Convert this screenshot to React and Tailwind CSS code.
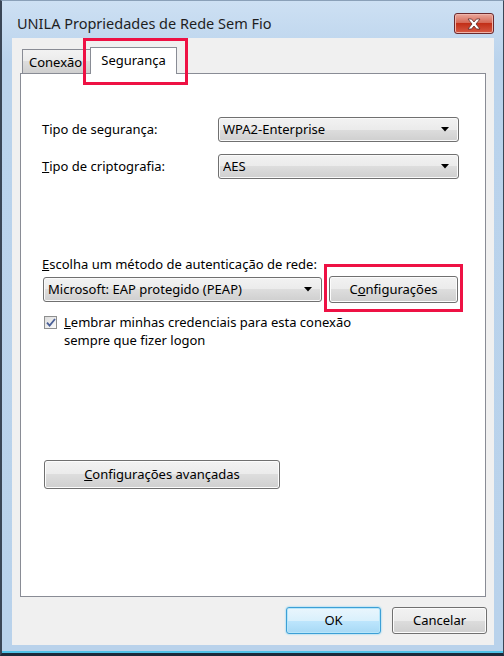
import React from "react";

const font = "font-['Segoe_UI','Noto_Sans','Open_Sans',sans-serif]";

function Arrow() {
  return (
    <svg width="8" height="5" viewBox="0 0 8 5" className="shrink-0">
      <path d="M0 0h8L4 4.5z" fill="#000" />
    </svg>
  );
}

function Combo({ value, width }) {
  return (
    <div
      className={`${width} h-[25px] flex items-center justify-between pl-[4px] pr-[9px] border border-[#707070] rounded-[3px] bg-[linear-gradient(#f2f2f2,#ebebeb_50%,#dddddd_50%,#cfcfcf)] shadow-[inset_0_0_0_1px_#fafafa] text-[13px] text-black`}
    >
      <span className="truncate">{value}</span>
      <Arrow />
    </div>
  );
}

function Button({ children, className = "", primary }) {
  const look = primary
    ? "border-[#3c9fd6] bg-[linear-gradient(#eaf6fd,#d9f0fc_50%,#bee6fd_50%,#a7d9f5)] shadow-[inset_0_0_0_1px_#b7e6fa,0_0_2px_#5cc8f5]"
    : "border-[#707070] bg-[linear-gradient(#f2f2f2,#ebebeb_50%,#dddddd_50%,#cfcfcf)] shadow-[inset_0_0_0_1px_#fcfcfc]";
  return (
    <div
      className={`flex items-center justify-center border rounded-[3px] text-[13px] text-black ${look} ${className}`}
    >
      {children}
    </div>
  );
}

function Highlight({ className }) {
  return (
    <div
      className={`absolute border-[3px] border-[#ee1144] pointer-events-none ${className}`}
    />
  );
}

export default function App() {
  return (
    <div
      className={`${font} w-[504px] h-[656px] flex flex-col border-l-2 border-r border-b-[3px] border-t border-l-[#3a4656] border-r-[#3a4656] border-b-[#1c2a3a] border-t-[#8aa0b8] bg-[linear-gradient(#cde0f3,#bad3ec_60px,#b9d2eb_calc(100%-2px),#4fc3e8_calc(100%-2px),#4fc3e8)]`}
    >
      {/* title bar */}
      <div className="h-[37px] shrink-0 flex items-start justify-between pl-[15px] pr-[9px] pt-[12px]">
        <span className="text-[14.5px] leading-[20px] text-[#1e1e1e]">
          UNILA Propriedades de Rede Sem Fio
        </span>
        <div className="w-[40px] h-[21px] flex items-center justify-center rounded-[3px] border border-[#6b2a2e] bg-[linear-gradient(#e9a89c,#d66a58_45%,#c22f18_50%,#d65a44)] shadow-[inset_0_0_0_1px_#efb4aa]">
          <svg width="16" height="12" viewBox="0 0 16 12">
            <path
              d="M2 1h3.5L8 4l2.5-3H14l-4 5 4 5h-3.5L8 8l-2.5 3H2l4-5z"
              fill="#fff"
              stroke="#5a2a2a"
              strokeWidth="0.8"
              strokeLinejoin="round"
            />
          </svg>
        </div>
      </div>

      {/* client area */}
      <div className="ml-[10px] mr-[9px] h-[607px] bg-[#f0f0f0] flex flex-col pt-[9px] pl-[8px] pr-[8px]">
        {/* tabs */}
        <div className="flex items-end h-[26px] pl-[2px]">
          <div className="w-[69px] h-[24px] border border-b-0 border-[#898c95] bg-[linear-gradient(#f2f2f2,#ebebeb_50%,#dddddd_50%,#cfcfcf)] overflow-hidden pl-[6px] pt-[3px] text-[13px] leading-[18px] text-black whitespace-nowrap">
            Conexão
          </div>
          <div className="relative z-10 -ml-[1px] w-[87px] h-[27px] -mb-[1px] border border-b-0 border-[#898c95] bg-white flex justify-center pt-[3px] text-[13px] leading-[18px] text-black">
            Segurança
            <Highlight className="-left-[8px] -top-[10px] w-[105px] h-[47px]" />
          </div>
        </div>

        {/* tab page */}
        <div className="h-[524px] border border-[#898c95] bg-white pl-[21px] pt-[43px] flex flex-col text-[13px] text-black">
          <div className="flex items-center">
            <span className="w-[176px]">Tipo de segurança:</span>
            <Combo value="WPA2-Enterprise" width="w-[241px]" />
          </div>
          <div className="flex items-center mt-[12px]">
            <span className="w-[176px]">
              <span className="underline">T</span>ipo de criptografia:
            </span>
            <Combo value="AES" width="w-[241px]" />
          </div>

          <div className="mt-[77px] leading-[16px]">
            <span className="underline">E</span>scolha um método de autenticação de rede:
          </div>
          <div className="flex items-center mt-[4px] pl-[1px]">
            <Combo value="Microsoft: EAP protegido (PEAP)" width="w-[279px]" />
            <div className="relative ml-[7px]">
              <Button className="w-[129px] h-[27px]">
                C<span className="underline">o</span>nfigurações
              </Button>
              <Highlight className="-left-[5px] -top-[12px] w-[139px] h-[48px]" />
            </div>
          </div>

          <div className="flex items-start mt-[10px] pl-[2px] leading-[18px]">
            <div className="w-[13px] h-[13px] mt-[3px] shrink-0 border border-[#8e8f8f] bg-[linear-gradient(135deg,#dcdcdc,#fbfbfb)] flex items-center justify-center">
              <svg width="10" height="9" viewBox="0 0 10 9">
                <path
                  d="M1 4.6l2.6 3L9 1"
                  fill="none"
                  stroke="#4a5f97"
                  strokeWidth="1.8"
                />
              </svg>
            </div>
            <div className="ml-[7px]">
              <div>
                <span className="underline">L</span>embrar minhas credenciais para esta conexão
              </div>
              <div>sempre que fizer logon</div>
            </div>
          </div>

          <div className="mt-[111px] pl-[2px]">
            <Button className="w-[236px] h-[29px]">
              <span className="underline">C</span>onfigurações avançadas
            </Button>
          </div>
        </div>

        {/* bottom buttons */}
        <div className="flex justify-end gap-[11px] mt-[10px] -mr-[1px]">
          <Button primary className="w-[95px] h-[27px]">
            OK
          </Button>
          <Button className="w-[95px] h-[27px]">Cancelar</Button>
        </div>
      </div>
    </div>
  );
}
